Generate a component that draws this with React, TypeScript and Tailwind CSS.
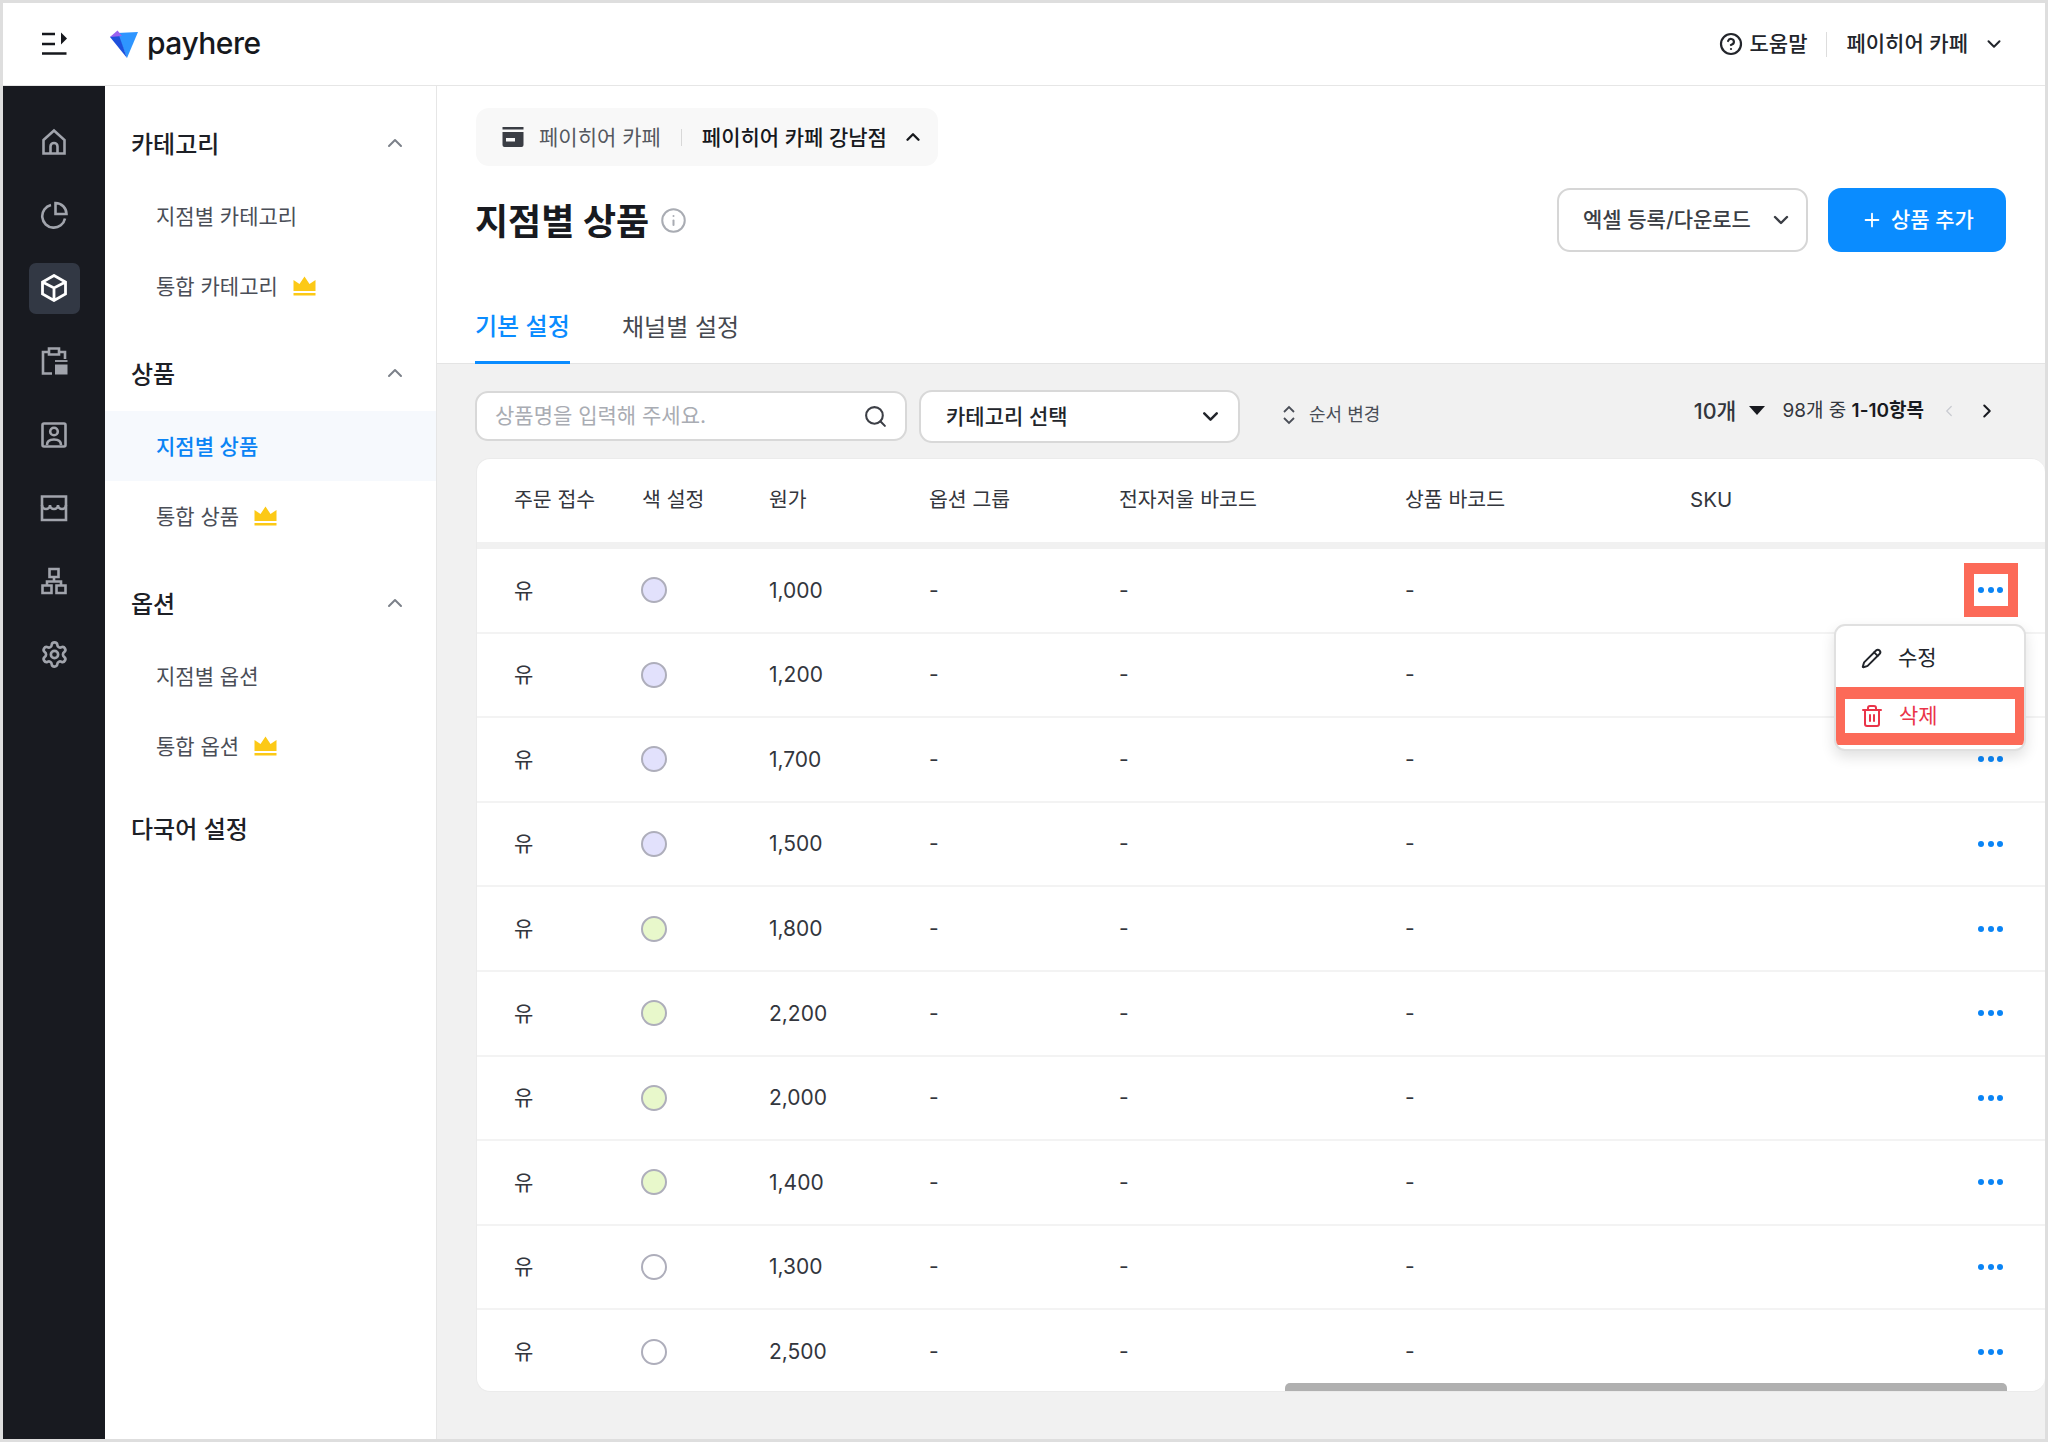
import { ChevronDown, ChevronLeft, ChevronRight, ChevronUp, CircleHelp, Info, Pencil, Plus, Search, Settings, Trash2 } from "lucide-react";

const rows = [
  { price: "1,000", color: "bg-[#e2e1fc]" },
  { price: "1,200", color: "bg-[#e2e1fc]" },
  { price: "1,700", color: "bg-[#e2e1fc]" },
  { price: "1,500", color: "bg-[#e2e1fc]" },
  { price: "1,800", color: "bg-[#e8f8cb]" },
  { price: "2,200", color: "bg-[#e8f8cb]" },
  { price: "2,000", color: "bg-[#e8f8cb]" },
  { price: "1,400", color: "bg-[#e8f8cb]" },
  { price: "1,300", color: "bg-white" },
  { price: "2,500", color: "bg-white" },
];

const columns = "grid grid-cols-[128px_127px_160px_190px_286px_285px_1fr] pl-[37px]";

function RailIcon({ children, active }: { children: React.ReactNode; active?: boolean }) {
  return (
    <div className={`flex h-[51px] w-[51px] items-center justify-center rounded-[7px] ${active ? "bg-[#323844] text-white" : "text-[#a1a4ac]"}`}>
      <svg width="28" height="28" viewBox="0 0 28 28" fill="none" stroke="currentColor" strokeWidth="2.6">
        {children}
      </svg>
    </div>
  );
}

function Crown() {
  return (
    <svg width="23" height="20" viewBox="0 0 22 20" className="ml-[15px] shrink-0">
      <path d="M0 4 L6 8 L11 0.5 L16 8 L22 4 V15 H0 Z" fill="#fcc916" />
      <rect x="0" y="17" width="22" height="2.5" fill="#fcc916" />
    </svg>
  );
}

function GroupTitle({ label, chevron = true, className = "" }: { label: string; chevron?: boolean; className?: string }) {
  return (
    <div className={`flex h-[70px] items-center justify-between pl-[26px] pr-[29px] text-[24px] font-medium text-[#1d2026] ${className}`}>
      <span className="pt-[3px]">{label}</span>
      {chevron && <ChevronUp size={24} strokeWidth={2} className="text-[#7c818a]" />}
    </div>
  );
}

function NavItem({ label, crown, active }: { label: string; crown?: boolean; active?: boolean }) {
  return (
    <div className={`flex h-[70px] items-center pl-[51px] text-[21px] ${active ? "bg-[#f6f9fd] font-medium text-[#0a84f5]" : "text-[#4a4e57]"}`}>
      <span className="pt-[2px]">{label}</span>
      {crown && <Crown />}
    </div>
  );
}

export default function App() {
  return (
    <div className="flex h-[1442px] w-[2048px] flex-col overflow-hidden border-x-[3px] border-b-[3px] border-t-[3px] border-[#dedede] bg-white font-['Inter','Noto_Sans_CJK_KR',sans-serif] text-[#22252b]">
      {/* Top bar */}
      <header className="flex h-[83px] shrink-0 items-center border-b border-[#e6e6e6] pl-[39px] pr-[40px]">
        <svg width="26" height="24" viewBox="0 0 26 24" className="shrink-0">
          <path d="M0 2 H13 M0 12 H13 M0 21.5 H24.5" stroke="#16181d" strokeWidth="2.4" fill="none" />
          <path d="M19 0.5 L25 6.5 L19 12.5 Z" fill="#16181d" />
        </svg>
        <svg width="30" height="30" viewBox="0 0 30 30" className="ml-[41px] shrink-0">
          <path d="M8 4 L29 3 L18 29 Z" fill="#2e95ff" />
          <path d="M1 8 L9 3.5 L18 29 Z" fill="#1e50dc" />
          <path d="M1 8 L8.5 1.5 L13 7 Z" fill="#9a62ef" />
        </svg>
        <span className="ml-[8px] pb-[3px] font-['Inter',sans-serif] text-[30px] font-medium leading-none tracking-[-0.5px] text-[#16181d]">payhere</span>
        <div className="ml-auto flex items-center text-[21px] font-medium">
          <CircleHelp size={24} strokeWidth={2.2} />
          <span className="ml-[7px]">도움말</span>
          <div className="mx-[19px] h-[25px] w-px bg-[#dddddd]" />
          <span>페이히어 카페</span>
          <ChevronDown size={22} strokeWidth={2.2} className="ml-[15px]" />
        </div>
      </header>

      <div className="flex min-h-0 flex-1">
        {/* Icon rail */}
        <nav className="flex w-[102px] shrink-0 flex-col items-center gap-[22.3px] bg-[#181a20] pt-[30px]">
          <RailIcon>
            <path d="M3.5 12 L14 2.5 L24.5 12 V25.5 H3.5 Z M10.5 25.5 V18.5 a3.5 3.5 0 0 1 7 0 V25.5" />
          </RailIcon>
          <RailIcon>
            <path d="M11 4 A 11.5 11.5 0 1 0 25 17.5 M15.5 2 A 11 11 0 0 1 26.5 13 H15.5 Z" />
          </RailIcon>
          <RailIcon active>
            <path d="M14 1.5 L25.5 8 V20 L14 26.5 L2.5 20 V8 Z M2.5 8 L14 14 L25.5 8 M14 14 V26.5" strokeWidth="2.8" />
          </RailIcon>
          <RailIcon>
            <path d="M9 5 H3 V26.5 H12 M9 1.5 H19 V7.5 H9 Z M19 5 H25 V12" />
            <path d="M15 14 H27.5" strokeWidth="1.8" />
            <path d="M15 17.5 H27.5 V27.5 H15 Z" fill="currentColor" stroke="none" />
          </RailIcon>
          <RailIcon>
            <rect x="2.5" y="2.5" width="23" height="23" rx="1.5" />
            <circle cx="14" cy="10.5" r="3.8" />
            <path d="M7 24 C7 19.5 11 18.5 14 18.5 C17 18.5 21 19.5 21 24" />
          </RailIcon>
          <RailIcon>
            <path d="M2 2.5 H26 V26 H2 Z" />
            <path d="M2 11 a4 4 0 0 0 8 0 a4 4 0 0 0 8 0 a4 4 0 0 0 8 0" />
          </RailIcon>
          <RailIcon>
            <path d="M9.5 2 H18.5 V10 H9.5 Z M2.5 18.5 H11.5 V26 H2.5 Z M16.5 18.5 H25.5 V26 H16.5 Z M14 10 V14.5 M7 18.5 V14.5 H21 V18.5" />
          </RailIcon>
          <div className="flex h-[51px] w-[51px] items-center justify-center text-[#a1a4ac]">
            <Settings size={29} strokeWidth={2.2} />
          </div>
        </nav>

        {/* Sidebar */}
        <aside className="w-[332px] shrink-0 border-r border-[#e6e6e6] pt-[22px]">
          <GroupTitle label="카테고리" />
          <div className="mt-[3px]">
            <NavItem label="지점별 카테고리" />
            <NavItem label="통합 카테고리" crown />
          </div>
          <GroupTitle label="상품" className="mt-[17px]" />
          <div className="mt-[3px]">
            <NavItem label="지점별 상품" active />
            <NavItem label="통합 상품" crown />
          </div>
          <GroupTitle label="옵션" className="mt-[17px]" />
          <div className="mt-[3px]">
            <NavItem label="지점별 옵션" />
            <NavItem label="통합 옵션" crown />
          </div>
          <GroupTitle label="다국어 설정" chevron={false} className="mt-[12px]" />
        </aside>

        {/* Main */}
        <main className="flex min-w-0 flex-1 flex-col bg-[#f1f1f1]">
          <section className="h-[278px] shrink-0 border-b border-[#e4e4e4] bg-white pl-[38px] pt-[22px]">
            <div className="ml-[1px] flex h-[58px] w-[462px] items-center rounded-[13px] bg-[#f8f8f8] pl-[26px] text-[21px]">
              <svg width="22" height="20" viewBox="0 0 22 20" className="shrink-0">
                <rect x="0.5" y="0" width="21" height="2.5" fill="#3a3d44" />
                <path d="M0.5 5 H21.5 V18 a2 2 0 0 1 -2 2 H2.5 a2 2 0 0 1 -2 -2 Z" fill="#3a3d44" />
                <rect x="4" y="11" width="9" height="3.5" fill="#f8f8f8" />
              </svg>
              <span className="ml-[15px] pt-[1px] text-[#55585f]">페이히어 카페</span>
              <div className="mx-[20px] h-[17px] w-px bg-[#d8d8d8]" />
              <span className="pt-[1px] font-medium text-[#16181d]">페이히어 카페 강남점</span>
              <ChevronUp size={22} strokeWidth={2.6} className="ml-[15px] text-[#16181d]" />
            </div>

            <div className="mt-[22px] flex h-[64px] items-center pr-[39px]">
              <h1 className="pt-[3px] text-[36px] font-bold text-[#181a20]">지점별 상품</h1>
              <Info size={27} strokeWidth={1.8} className="ml-[11px] text-[#a9acb3]" />
              <button className="ml-auto flex h-[64px] w-[251px] items-center rounded-[13px] border-2 border-[#d6d6d6] bg-white pl-[24px] text-[21px] font-medium text-[#3b3e45]">
                엑셀 등록/다운로드
                <ChevronDown size={24} strokeWidth={2.4} className="ml-[18px]" />
              </button>
              <button className="ml-[20px] flex h-[64px] w-[178px] items-center rounded-[13px] bg-[#0a8cff] pl-[33px] text-[21px] font-medium text-white">
                <Plus size={22} strokeWidth={2} />
                <span className="ml-[8px]">상품 추가</span>
              </button>
            </div>

            <div className="mt-[38px] flex h-[74px] items-center text-[24px]">
              <div className="flex h-full w-[95px] items-center border-b-[3px] border-[#0a8cff] pt-[2px] font-medium text-[#0a8cff]">기본 설정</div>
              <div className="ml-[52px] pt-[2px] text-[#45484f]">채널별 설정</div>
            </div>
          </section>

          <div className="flex h-[94px] shrink-0 items-start pl-[38px] pt-[26px]">
            <div className="mt-[1px] flex h-[50px] w-[432px] items-center justify-between rounded-[13px] border-2 border-[#d8d8d8] bg-white pl-[18px] pr-[17px] text-[21px] text-[#a9acb3]">
              상품명을 입력해 주세요.
              <Search size={25} strokeWidth={2} className="text-[#3c3f46]" />
            </div>
            <div className="ml-[12px] flex h-[53px] w-[321px] items-center justify-between rounded-[13px] border-2 border-[#d8d8d8] bg-white pl-[25px] pr-[15px] text-[21px] font-medium">
              카테고리 선택
              <ChevronDown size={25} strokeWidth={2.4} />
            </div>
            <div className="ml-[42px] mt-[11px] flex items-center text-[18px] text-[#4a4e57]">
              <svg width="14" height="22" viewBox="0 0 14 22" fill="none" stroke="#4a4e57" strokeWidth="1.8">
                <path d="M2 8 L7 3 L12 8 M2 14 L7 19 L12 14" />
              </svg>
              <span className="ml-[13px]">순서 변경</span>
            </div>
            <div className="ml-auto mr-[47px] mt-[5px] flex items-center text-[19px] text-[#33363d]">
              <span className="text-[21.5px] font-medium">10개</span>
              <svg width="16" height="10" viewBox="0 0 16 10" className="ml-[13px]">
                <path d="M0 0 H16 L8 9 Z" fill="#181a20" />
              </svg>
              <span className="ml-[17px]">98개 중 <b className="font-semibold text-[#181a20]">1-10항목</b></span>
              <ChevronLeft size={18} strokeWidth={1.6} className="ml-[16px] text-[#c8cad0]" />
              <ChevronRight size={22} strokeWidth={2.2} className="ml-[18px] text-[#181a20]" />
            </div>
          </div>

          {/* Table */}
          <div className="relative ml-[39px] h-[934px] shrink-0 overflow-hidden rounded-[14px] border-l border-t border-b border-[#ebebeb] bg-white">
            <div className={`${columns} h-[83px] items-center pb-[1px] text-[20.5px] text-[#33363d]`}>
              <span>주문 접수</span>
              <span>색 설정</span>
              <span>원가</span>
              <span>옵션 그룹</span>
              <span>전자저울 바코드</span>
              <span>상품 바코드</span>
              <span>SKU</span>
            </div>
            <div className="h-[7px] bg-[#f1f1f1]" />
            {rows.map((row) => (
              <div key={row.price} className={`${columns} h-[84.6px] items-center border-b-2 border-[#f3f3f3] text-[21px] text-[#33363d]`}>
                <span>유</span>
                <span className={`ml-[-1px] block h-[26px] w-[26px] rounded-full border-2 border-[#aeaebb] ${row.color}`} />
                <span>{row.price}</span>
                <span>-</span>
                <span>-</span>
                <span>-</span>
                <div className="flex justify-end gap-[3.3px] pr-[42px]">
                  <span className="block h-[6px] w-[6px] rounded-full bg-[#0a84f5]" />
                  <span className="block h-[6px] w-[6px] rounded-full bg-[#0a84f5]" />
                  <span className="block h-[6px] w-[6px] rounded-full bg-[#0a84f5]" />
                </div>
              </div>
            ))}

            {/* Highlight around the row menu button */}
            <div className="absolute right-[27px] top-[104px] h-[54px] w-[54px] border-x-[10px] border-y-[11px] border-[#fc6a58]" />

            {/* Row menu */}
            <div className="absolute right-[19px] top-[165px] h-[127px] w-[192px] overflow-hidden rounded-[11px] border-2 border-[#e0e0e0] bg-white text-[21px] shadow-[0_6px_14px_rgba(0,0,0,0.12)]">
              <div className="flex h-[61px] items-center pl-[25px] pt-[3px] text-[#22252b]">
                <Pencil size={21} strokeWidth={2.2} />
                <span className="ml-[16px]">수정</span>
              </div>
              <div className="flex h-[58px] items-center border-x-[9px] border-y-[12px] border-[#fc6a58] pl-[15px] text-[#ea3449]">
                <Trash2 size={24} strokeWidth={2} />
                <span className="ml-[15px]">삭제</span>
              </div>
            </div>

            {/* Horizontal scrollbar */}
            <div className="absolute bottom-0 right-[38px] h-[8px] w-[722px] rounded-t-[5px] bg-[#b0b0b0]" />
          </div>
        </main>
      </div>
    </div>
  );
}
